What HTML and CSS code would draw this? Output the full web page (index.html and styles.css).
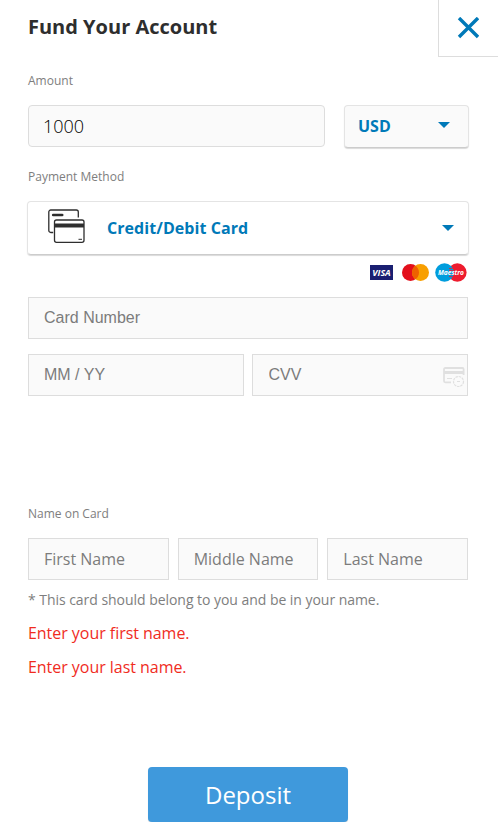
FILE: index.html
```html
<!DOCTYPE html>
<html lang="en">
<head>
<meta charset="utf-8">
<title>Fund Your Account</title>
<link rel="stylesheet" href="styles.css">
</head>
<body>
<header class="header">
  <h1 class="title">Fund Your Account</h1>
  <button class="close" type="button" aria-label="Close">
    <svg width="22" height="22" viewBox="0 0 22 22"><path d="M2 1L21 20M21 1L2 20" stroke="#0079b8" stroke-width="3.400" fill="none"/></svg>
  </button>
</header>
<form class="form">
  <label class="label" for="amount">Amount</label>
  <div class="amount-row">
    <input class="field amount" id="amount" type="text" value="1000">
    <div class="select currency">
      <span>USD</span>
      <svg class="caret" width="12" height="6" viewBox="0 0 12 6"><path d="M0 0H12L6 6Z" fill="#0079b8"/></svg>
    </div>
  </div>

  <div class="label label-method">Payment Method</div>
  <div class="select method">
    <svg class="cards" width="38" height="35" viewBox="0 0 38 35" fill="none" stroke="#2e2e2e" stroke-width="1.3">
      <path d="M5.200 23.500H2.800A2 2 0 0 1 .8 21.500V3A2 2 0 0 1 2.800 1H28.300A2 2 0 0 1 30.300 3V8.500"/>
      <path d="M5.200 6H14.200" stroke-width="2.600" stroke-linecap="round"/>
      <rect x="6.500" y="11" width="29.500" height="22.300" rx="2"/>
      <path d="M6.500 16.500H36" stroke-width="4"/>
      <path d="M30.500 30.300H34" stroke-width="1"/>
    </svg>
    <span class="method-name">Credit/Debit Card</span>
    <svg class="caret" width="12" height="6" viewBox="0 0 12 6"><path d="M0 0H12L6 6Z" fill="#0079b8"/></svg>
  </div>
  <div class="brands">
    <svg width="23" height="15" viewBox="0 0 23 15"><rect width="23" height="15" fill="#1a1f71"/><text class="visa" x="11.500" y="10.500" text-anchor="middle" textLength="18.500" lengthAdjust="spacingAndGlyphs">VISA</text></svg>
    <svg width="27" height="17" viewBox="0 0 27 17"><circle cx="8.500" cy="8.500" r="8.500" fill="#e30f1b"/><circle cx="18.500" cy="8.500" r="8.500" fill="#f89f00"/><path d="M13.500 1.630A8.500 8.500 0 0 1 13.500 15.370A8.500 8.500 0 0 1 13.500 1.630Z" fill="#ee6000"/></svg>
    <svg width="32" height="19" viewBox="0 0 32 19"><circle cx="22.300" cy="9.500" r="9.300" fill="#ee1c2e"/><circle cx="9.500" cy="9.500" r="9.300" fill="#009ddd"/><path d="M14 5.500H17.500M14 7.500H18.300M14 11.500H18.300M14 13.500H17.500" stroke="#ee1c2e" stroke-width=".8"/><text class="maestro" x="16" y="11.700" text-anchor="middle" textLength="26" lengthAdjust="spacingAndGlyphs">Maestro</text></svg>
  </div>

  <input class="field card" type="text" placeholder="Card Number">
  <div class="pair">
    <input class="field card" type="text" placeholder="MM / YY">
    <div class="cvv">
      <input class="field card cvv-field" type="text" placeholder="CVV">
      <svg class="cvv-icon" width="22" height="20" viewBox="0 0 22 20" fill="none" stroke="#e0e0e0">
        <path d="M8 15.300H2.200A1.200 1.200 0 0 1 1 14.100V2.200A1.200 1.200 0 0 1 2.200 1H19.400A1.200 1.200 0 0 1 20.600 2.200V8" stroke-width="1.800"/>
        <path d="M1 5.500H20.600" stroke-width="3"/>
        <path d="M4 11.500H9" stroke-width="1"/>
        <circle cx="15.500" cy="14.500" r="5" stroke-width="1.200" stroke-dasharray="2.500 .8"/>
        <path d="M14 14.500H17" stroke-width="1"/>
      </svg>
    </div>
  </div>

  <div class="label label-name">Name on Card</div>
  <div class="names">
    <input class="field" type="text" placeholder="First Name">
    <input class="field" type="text" placeholder="Middle Name">
    <input class="field" type="text" placeholder="Last Name">
  </div>
  <p class="note">* This card should belong to you and be in your name.</p>
  <p class="error">Enter your first name.</p>
  <p class="error">Enter your last name.</p>
  <button class="deposit" type="button">Deposit</button>
</form>
</body>
</html>
```

FILE: styles.css
```css
* { box-sizing: border-box; }
body {
  margin: 0;
  background: #fff;
  color: #2e2e2e;
  font-family: "Open Sans", sans-serif;
}
.header {
  display: flex;
  justify-content: space-between;
  height: 57px;
  padding-left: 28px;
}
.title {
  margin: 0;
  font-size: 20px;
  line-height: 53px;
  font-weight: 700;
}
.close {
  display: flex;
  align-items: center;
  justify-content: center;
  width: 60px;
  height: 57px;
  padding: 0 1px 0 0;
  border: solid #ddd;
  border-width: 0 0 1px 1px;
  background: #fff;
}
.form { padding: 15px 30px 0 28px; }
.label {
  display: block;
  height: 18px;
  font-size: 12px;
  line-height: 18px;
  color: #7e7e7e;
}
.amount-row {
  display: flex;
  justify-content: space-between;
  margin: 15px -1px 0 0;
}
.field {
  display: block;
  width: 100%;
  min-width: 0;
  height: 42px;
  padding: 0 15px;
  border: 1px solid #ddd;
  border-radius: 0;
  background: #fafafa;
  color: #2e2e2e;
  font: 16px "Open Sans", sans-serif;
}
.field::placeholder { color: #7c7c7c; opacity: 1; }
.amount { width: 297px; padding: 0 14px 1px; border-radius: 4px; font-size: 18px; font-weight: 300; color: #000; }
.card { font-family: "Liberation Sans", sans-serif; }
.cvv-field { padding-left: 15.500px; }
.select {
  display: flex;
  align-items: center;
  border: 1px solid #e4e4e4;
  border-bottom-color: #ccc;
  border-radius: 4px;
  box-shadow: 0 1px 1px rgba(0, 0, 0, .15);
  color: #0079b8;
  font-size: 16px;
  font-weight: 700;
}
.caret { margin-left: auto; }
.currency {
  width: 125px;
  height: 43px;
  padding: 0 18px 1px 13px;
  background: #fafafa;
}
.currency .caret { margin-bottom: 2px; }
.label-method { margin-top: 20px; }
.method {
  height: 54px;
  margin: 15px -1px 0;
  padding: 0 14px 0 20px;
}
.method-name { letter-spacing: .06px; }
.cards { margin: 0 21px 3px 0; }
.brands {
  display: flex;
  justify-content: flex-end;
  align-items: center;
  height: 19px;
  margin: 8px 1px 15px 0;
  gap: 6px;
}
.brands svg:first-child { margin-right: 3px; }
.visa { fill: #fff; font: italic 700 8px "Open Sans", sans-serif; }
.maestro { fill: #fff; font: italic 700 6.500px "Open Sans", sans-serif; }
.pair {
  display: grid;
  grid-template-columns: 1fr 1fr;
  gap: 8px;
  margin-top: 15px;
}
.cvv { position: relative; }
.cvv-icon { position: absolute; top: 13px; right: 3px; }
.label-name { margin-top: 109px; }
.names {
  display: grid;
  grid-template-columns: repeat(3, 1fr);
  gap: 9px;
  margin-top: 15px;
}
.note { margin: 10px 0 0; font-size: 14px; line-height: 20px; letter-spacing: -.04px; color: #7e7e7e; }
.error { margin: 12px 0 0; font-size: 16px; line-height: 22px; letter-spacing: -.04px; color: #f02c1e; }
.deposit {
  display: block;
  width: 200px;
  height: 55px;
  margin: 89px auto 0 120px;
  padding: 0;
  border: 0;
  border-radius: 4px;
  background: #3f99dc;
  box-shadow: 0 1px 1px rgba(0, 0, 0, .15);
  color: #fff;
  font: 24px "Open Sans", sans-serif;
}
```
